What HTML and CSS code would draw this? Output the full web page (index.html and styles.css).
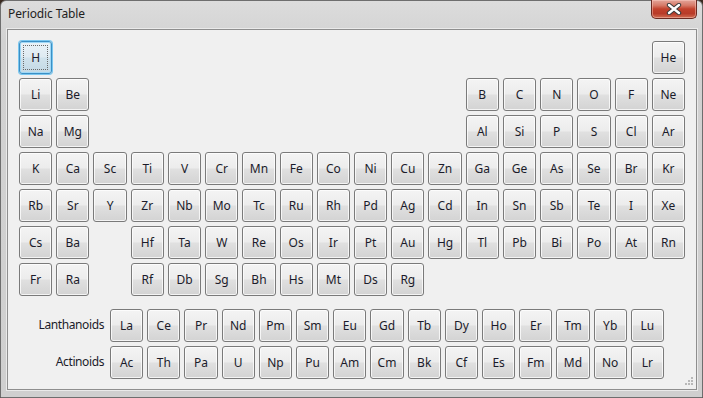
FILE: index.html
```html
<!DOCTYPE html>
<html>
<head>
<meta charset="utf-8">
<title>Periodic Table</title>
<link rel="stylesheet" href="styles.css">
</head>
<body>
<div class="window">
  <div class="titlebar">
    <div class="title">Periodic Table</div>
    <div class="close">
      <svg width="18" height="12" viewBox="0 0 18 12"><path d="M4 2 L14 10 M14 2 L4 10" stroke="#3a3a3a" stroke-width="4.4" stroke-linecap="round"/><path d="M4 2 L14 10 M14 2 L4 10" stroke="#ffffff" stroke-width="2.4" stroke-linecap="round"/></svg>
    </div>
  </div>
  <div class="client">
    <div class="table">
      <div class="el focus"><span>H</span></div><div class="s16"></div><div class="el">He</div>
      <div class="el">Li</div><div class="el">Be</div><div class="s10"></div><div class="el">B</div><div class="el">C</div><div class="el">N</div><div class="el">O</div><div class="el">F</div><div class="el">Ne</div>
      <div class="el">Na</div><div class="el">Mg</div><div class="s10"></div><div class="el">Al</div><div class="el">Si</div><div class="el">P</div><div class="el">S</div><div class="el">Cl</div><div class="el">Ar</div>
      <div class="el">K</div><div class="el">Ca</div><div class="el">Sc</div><div class="el">Ti</div><div class="el">V</div><div class="el">Cr</div><div class="el">Mn</div><div class="el">Fe</div><div class="el">Co</div><div class="el">Ni</div><div class="el">Cu</div><div class="el">Zn</div><div class="el">Ga</div><div class="el">Ge</div><div class="el">As</div><div class="el">Se</div><div class="el">Br</div><div class="el">Kr</div>
      <div class="el">Rb</div><div class="el">Sr</div><div class="el">Y</div><div class="el">Zr</div><div class="el">Nb</div><div class="el">Mo</div><div class="el">Tc</div><div class="el">Ru</div><div class="el">Rh</div><div class="el">Pd</div><div class="el">Ag</div><div class="el">Cd</div><div class="el">In</div><div class="el">Sn</div><div class="el">Sb</div><div class="el">Te</div><div class="el">I</div><div class="el">Xe</div>
      <div class="el">Cs</div><div class="el">Ba</div><div class="s1"></div><div class="el">Hf</div><div class="el">Ta</div><div class="el">W</div><div class="el">Re</div><div class="el">Os</div><div class="el">Ir</div><div class="el">Pt</div><div class="el">Au</div><div class="el">Hg</div><div class="el">Tl</div><div class="el">Pb</div><div class="el">Bi</div><div class="el">Po</div><div class="el">At</div><div class="el">Rn</div>
      <div class="el">Fr</div><div class="el">Ra</div><div class="s1"></div><div class="el">Rf</div><div class="el">Db</div><div class="el">Sg</div><div class="el">Bh</div><div class="el">Hs</div><div class="el">Mt</div><div class="el">Ds</div><div class="el">Rg</div>
    </div>
    <div class="fblock">
      <div class="frow">
        <div class="label">Lanthanoids</div>
        <div class="fcells">
          <div class="el">La</div><div class="el">Ce</div><div class="el">Pr</div><div class="el">Nd</div><div class="el">Pm</div><div class="el">Sm</div><div class="el">Eu</div><div class="el">Gd</div><div class="el">Tb</div><div class="el">Dy</div><div class="el">Ho</div><div class="el">Er</div><div class="el">Tm</div><div class="el">Yb</div><div class="el">Lu</div>
        </div>
      </div>
      <div class="frow">
        <div class="label">Actinoids</div>
        <div class="fcells">
          <div class="el">Ac</div><div class="el">Th</div><div class="el">Pa</div><div class="el">U</div><div class="el">Np</div><div class="el">Pu</div><div class="el">Am</div><div class="el">Cm</div><div class="el">Bk</div><div class="el">Cf</div><div class="el">Es</div><div class="el">Fm</div><div class="el">Md</div><div class="el">No</div><div class="el">Lr</div>
        </div>
      </div>
    </div>
    <svg class="grip" width="10" height="10" viewBox="0 0 10 10">
      <g fill="#b8b8b8">
        <rect x="8" y="0" width="2" height="2"/>
        <rect x="5" y="3" width="2" height="2"/><rect x="8" y="3" width="2" height="2"/>
        <rect x="2" y="6" width="2" height="2"/><rect x="5" y="6" width="2" height="2"/><rect x="8" y="6" width="2" height="2"/>
      </g>
    </svg>
  </div>
</div>
</body>
</html>
```
FILE: styles.css
```css
* { box-sizing: border-box; }
html, body { margin: 0; padding: 0; }
body {
  width: 703px;
  height: 398px;
  overflow: hidden;
  background: #3a2a20;
  font-family: "Noto Sans", "Open Sans", sans-serif;
}
.window {
  width: 703px;
  height: 398px;
  background: linear-gradient(#dcdcdc, #d2d2d2 40px, #cfcfcf);
  border: 1px solid #6e6e6e;
  border-radius: 6px 6px 0 0;
  display: flex;
  flex-direction: column;
}
.titlebar {
  height: 28px;
  flex: none;
  display: flex;
  align-items: flex-start;
  justify-content: space-between;
  padding: 0 5px 0 7px;
}
.title {
  font-size: 12px;
  line-height: 12px;
  color: #1e1e1e;
  margin-top: 7px;
  letter-spacing: -0.1px;
}
.close {
  width: 46px;
  height: 19px;
  margin-top: -1px;
  border: 1px solid #6b2a22;
  border-top: none;
  border-radius: 0 0 5px 5px;
  background: linear-gradient(#e3a59a 0%, #d77a68 30%, #c2412c 50%, #b83b29 75%, #d06d52 100%);
  box-shadow: inset 0 0 0 1px rgba(255,210,200,0.45);
  display: flex;
  align-items: center;
  justify-content: center;
}
.close svg { display: block; }
.client {
  position: relative;
  flex: 1;
  margin: 0 5px 7px 6px;
  background: #f0f0f0;
  border: 1px solid #8e8e8e;
  box-shadow: 0 0 0 1px #eaeaea;
  padding: 11px 0 0 11px;
}
.table {
  width: 666px;
  display: grid;
  grid-template-columns: repeat(18, 1fr);
  grid-auto-rows: 33px;
  gap: 4px;
}
.s1 { grid-column: span 1; }
.s10 { grid-column: span 10; }
.s16 { grid-column: span 16; }
.el {
  height: 33px;
  border: 1px solid #7a7a7a;
  border-radius: 3px;
  background: linear-gradient(#f4f4f4 0%, #ececec 48%, #e0e0e0 52%, #d3d3d3 100%);
  box-shadow: inset 0 0 0 1px rgba(255,255,255,0.75);
  display: flex;
  align-items: center;
  justify-content: center;
  font-size: 12px;
  color: #1b1b2a;
  padding-bottom: 1px;
}
.el.focus {
  border: 1px solid #3c8fc4;
  box-shadow: 0 0 0 1px #79c7f0, inset 0 0 0 1px #9fd8f6;
  background: linear-gradient(#eaf3f8 0%, #dfeaf1 48%, #d0e2ec 52%, #c3d9e5 100%);
  position: relative;
}
.el.focus::after {
  content: "";
  position: absolute;
  left: 3px; top: 3px; right: 3px; bottom: 3px;
  border: 1px dotted #6a6a6a;
}
.fblock {
  margin-top: 13px;
  display: flex;
  flex-direction: column;
  gap: 4px;
}
.frow {
  display: flex;
  align-items: center;
  gap: 6px;
}
.label {
  width: 85px;
  text-align: right;
  font-size: 12px;
  letter-spacing: -0.4px;
  color: #1b1b2a;
  padding-bottom: 2px;
}
.fcells {
  width: 554px;
  display: grid;
  grid-template-columns: repeat(15, 1fr);
  gap: 4px;
}
.grip {
  position: absolute;
  right: 3px;
  bottom: 2px;
}
```
